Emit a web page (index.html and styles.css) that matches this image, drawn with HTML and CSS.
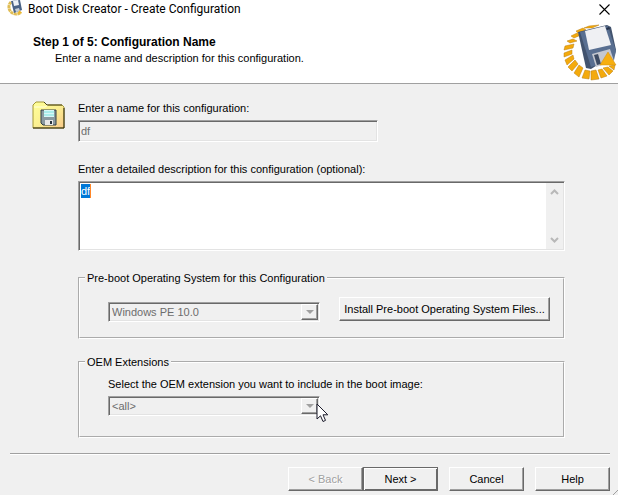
FILE: index.html
```html
<!DOCTYPE html>
<html lang="en">
<head>
    <meta charset="UTF-8">
    <meta name="viewport" content="width=device-width, initial-scale=1.0">
    <title>Boot Disk Creator - Create Configuration</title>
    <link rel="stylesheet" href="styles.css">
</head>
<body>
    <form class="wizard" onsubmit="return false">
        <header class="header">
            <div class="titlebar">
                <svg class="app-icon" width="16" height="18" viewBox="0 0 16 18">
                    <path d="M4 2A7 7 0 1 0 14 12" fill="none" stroke="#e0bd55" stroke-width="3" stroke-dasharray="3 .5"/>
                    <path d="M4 1L13 0L15 10L7 13Z" fill="#4a6386"/>
                    <path d="M6 1L11 0L12 5L7 6Z" fill="#edf1f6"/>
                    <path d="M8 9L12 8L13 11L9 12Z" fill="#c3ccd6"/>
                    <path d="M12 10L15 13L11 14Z" fill="#eeb62a"/>
                </svg>
                <span class="title">Boot Disk Creator - Create Configuration</span>
                <button type="button" class="close" aria-label="Close">
                    <svg width="11" height="11" viewBox="0 0 11 11"><path d="M.5 .5L10.500 10.500M10.500 .5L.5 10.500" stroke="#000" stroke-width="1.100"/></svg>
                </button>
            </div>
            <div class="banner">
                <div class="banner-text">
                    <h1>Step 1 of 5: Configuration Name</h1>
                    <p>Enter a name and description for this configuration.</p>
                </div>
                <svg class="logo" width="54" height="58" viewBox="0 0 54 58">
                    <g fill="#f4aa0c" stroke="#b87d10" stroke-width=".5">
                        <path d="M21 4L26 2L36 1L29 4Z"/>
                        <path d="M13 7L20 4L23 6L15 9Z"/>
                        <path d="M8 12L14 9L18 11L11 14Z"/>
                        <path d="M4 17L10 15L14 17L7 19Z"/>
                        <path d="M2 22L11 20L10 24L1 26Z"/>
                        <path d="M1 29L9 26L9 30L1 33Z"/>
                        <path d="M2 36L10 31L11 35L4 41Z"/>
                        <path d="M5 43L12 36L15 40L9 47Z"/>
                        <path d="M11 49L16 41L20 44L16 53Z"/>
                        <path d="M19 54L22 46L27 47L26 55Z"/>
                        <path d="M28 56L28 47L33 46L36 55Z"/>
                        <path d="M38 54L35 46L39 45L44 52Z"/>
                        <path d="M46 51L40 44L45 43L50 47Z"/>
                        <path d="M51 46L46 42L52 41Z"/>
                    </g>
                    <path d="M15 8L44 1L48 3L53 26L52 30L28 45L23 44Z" fill="#42536e"/>
                    <path d="M17 8L45 2L53 27L51 36L28 43Z" fill="#596f91"/>
                    <path d="M22 7L42 2L48 21L26 26Z" fill="#eff0f3"/>
                    <path d="M43 4L46 3L47 5L44 6Z" fill="#26334a"/>
                    <path d="M29 30L47 25L51 37L33 43Z" fill="#c4c7cf"/>
                    <path d="M31 31L35 30L38 40L34 41Z" fill="#3d4b63"/>
                    <path d="M45 28L53 41L37 41Z" fill="#f6ae10" stroke="#d28d0a" stroke-width=".5"/>
                </svg>
            </div>
        </header>

        <main class="content">
            <svg class="folder" width="34" height="28" viewBox="0 0 34 28">
                <defs>
                    <linearGradient id="folderFill" x1="0" y1="0" x2="1" y2="1">
                        <stop offset="0" stop-color="#ffff98"/>
                        <stop offset=".5" stop-color="#fbf091"/>
                        <stop offset="1" stop-color="#f8c88a"/>
                    </linearGradient>
                </defs>
                <path d="M1 4L4 1H12L15 4H30L32 6V27H1Z" fill="url(#folderFill)" stroke="#a39838"/>
                <path d="M2 6H13L16 4" fill="none" stroke="#ffffdc"/>
                <path d="M1 27H32V7" fill="none" stroke="#29230a"/>
                <path d="M12 1L15 4H30" fill="none" stroke="#4b4518"/>
                <path d="M9 9H24V24H11L9 22Z" fill="#8b9aa0" stroke="#303d44"/>
                <path d="M12 9H22V16H12Z" fill="#d9f7f6"/>
                <path d="M12 11H22M12 14H22" stroke="#7ce2df"/>
                <path d="M13 19H21V24H13Z" fill="#e8e8e8"/>
                <path d="M18 20H20V23H18Z" fill="#25313a"/>
            </svg>

            <div class="fields">
                <div class="field">
                    <label for="name">Enter a name for this configuration:</label>
                    <input type="text" id="name" class="sunken name" value="df" disabled>
                </div>

                <div class="field">
                    <label for="description">Enter a detailed description for this configuration (optional):</label>
                    <div class="sunken memo">
                        <textarea id="description" spellcheck="false">df</textarea>
                        <i class="caret"></i>
                        <div class="scrollbar">
                            <svg width="9" height="6" viewBox="0 0 9 6"><path d="M1 5L4.500 1.500L8 5" fill="none" stroke="#b8b8b8" stroke-width="2"/></svg>
                            <svg width="9" height="6" viewBox="0 0 9 6"><path d="M1 1L4.500 4.500L8 1" fill="none" stroke="#b8b8b8" stroke-width="2"/></svg>
                        </div>
                    </div>
                </div>

                <fieldset class="group preboot">
                    <legend>Pre-boot Operating System for this Configuration</legend>
                    <div class="row">
                        <div class="sunken combo">
                            <select aria-label="Pre-boot Operating System" disabled>
                                <option>Windows PE 10.0</option>
                            </select>
                            <span class="arrow"></span>
                        </div>
                        <button type="button" class="button install">Install Pre-boot Operating System Files...</button>
                    </div>
                </fieldset>

                <fieldset class="group oem">
                    <legend>OEM Extensions</legend>
                    <label for="oem">Select the OEM extension you want to include in the boot image:</label>
                    <div class="sunken combo">
                        <select id="oem" disabled>
                            <option>&lt;all&gt;</option>
                        </select>
                        <span class="arrow"></span>
                        <svg class="cursor" width="13" height="20" viewBox="0 0 13 20"><path d="M1 1V16L4.500 12.800L7 18.500L9.500 17.400L7 11.800H11.800Z" fill="#fff" stroke="#1b1b2b"/></svg>
                    </div>
                </fieldset>
            </div>
        </main>

        <footer class="footer">
            <div class="nav">
                <button type="button" class="button" disabled>&lt; Back</button>
                <button type="submit" class="button default">Next &gt;</button>
            </div>
            <button type="button" class="button">Cancel</button>
            <button type="button" class="button">Help</button>
        </footer>
        <svg class="grip" width="5" height="5" viewBox="0 0 5 5"><path d="M0 5L5 0" stroke="#a0a0a0"/></svg>
    </form>
    <script>
        const description = document.getElementById("description");
        description.focus();
        description.select();
    </script>
</body>
</html>
```
FILE: styles.css
```css
* {
    box-sizing: border-box;
}
body {
    margin: 0;
    background-color: #f0f0f0;
    color: #000;
    font-family: "Liberation Sans", Arial, sans-serif;
    font-size: 11px;
    line-height: 14px;
}
.wizard {
    position: relative;
    display: flex;
    flex-direction: column;
    min-height: 100vh;
}
input, select, textarea, button {
    font: inherit;
    color: inherit;
    margin: 0;
}
.header {
    background-color: #fff;
    border-bottom: 1px solid #a0a0a0;
}
.titlebar {
    display: flex;
    align-items: center;
    height: 18px;
    padding: 0 8px 0 7px;
    font-family: Roboto, "Open Sans", sans-serif;
    font-size: 12px;
}
.title {
    margin-left: 5px;
}
.close {
    display: flex;
    margin-left: auto;
    padding: 0;
    border: 0;
    background: none;
}
.banner {
    display: flex;
    justify-content: space-between;
    height: 65px;
    padding: 0 1px 0 33px;
}
.banner-text {
    padding-top: 16px;
}
h1 {
    margin: 0;
    font-size: 12px;
    line-height: 16px;
}
.banner p {
    margin: 0;
    padding-left: 22px;
    line-height: 16px;
}
.logo {
    margin-top: 6px;
}
.content {
    display: flex;
    padding: 17px 53px 15px 32px;
}
.folder {
    flex: none;
    margin-right: 12px;
}
.fields {
    flex: 1;
    min-width: 0;
}
.field label {
    display: block;
    margin-bottom: 5px;
}
.sunken {
    border: 1px solid;
    border-color: #a0a0a0 #fff #fff #a0a0a0;
    box-shadow: inset 1px 1px #696969, inset -1px -1px #e3e3e3;
}
.name {
    display: block;
    width: 300px;
    max-width: 100%;
    height: 22px;
    padding: 0 2px;
    background-color: #f0f0f0;
    color: #6d6d6d;
    margin-bottom: 20px;
}
.memo {
    position: relative;
    display: flex;
    height: 70px;
    padding: 1px;
    background-color: #fff;
    margin-bottom: 20px;
}
.memo textarea {
    flex: 1;
    min-width: 0;
    padding: 1px;
    border: 0;
    outline: 0;
    resize: none;
    overflow: hidden;
    background: none;
}
.memo textarea::selection {
    background-color: #0078d7;
    color: #fff;
}
.caret {
    position: absolute;
    left: 11px;
    top: 2px;
    width: 1px;
    height: 14px;
    background-color: #ff8728;
}
.scrollbar {
    display: flex;
    flex-direction: column;
    justify-content: space-between;
    align-items: center;
    width: 17px;
    padding: 6px 0;
    background-color: #f0f0f0;
}
.group {
    min-width: 0;
    margin: 0 0 16px;
    padding: 0 13px 0 28px;
    border: 2px groove #fff;
}
.group legend {
    margin-left: -23px;
    padding: 0 2px;
}
.preboot {
    height: 68px;
}
.oem {
    height: 83px;
    margin-bottom: 0;
}
.oem label {
    display: block;
    margin: 8px 0 5px;
}
.row {
    display: flex;
    justify-content: space-between;
    padding-top: 12px;
}
.combo {
    position: relative;
    display: flex;
    width: 212px;
    height: 20px;
    padding: 1px;
}
.row .combo {
    margin-top: 5px;
}
.combo select {
    flex: 1;
    appearance: none;
    padding: 0 2px;
    border: 0;
    background: none;
    color: #6d6d6d;
    opacity: 1;
}
.arrow {
    display: flex;
    align-items: center;
    justify-content: center;
    width: 17px;
    border: 1px solid;
    border-color: #fff #696969 #696969 #fff;
    box-shadow: inset -1px -1px #a0a0a0;
}
.arrow::after {
    content: "";
    border: 4px solid transparent;
    border-top-color: #a0a0a0;
    border-bottom: 0;
}
.cursor {
    position: absolute;
    right: -10px;
    top: 6px;
}
.button {
    width: 75px;
    height: 24px;
    padding: 0;
    border: 1px solid;
    border-color: #fff #696969 #696969 #fff;
    box-shadow: inset -1px -1px #a0a0a0;
    background-color: #f0f0f0;
}
.button:disabled {
    color: #a0a0a0;
    text-shadow: 1px 1px #fff;
}
.default {
    border-color: #696969;
    box-shadow: inset 1px 1px #fff, inset -1px -1px #696969;
}
.install {
    width: 211px;
}
.footer {
    display: flex;
    justify-content: flex-end;
    gap: 11px;
    margin: 0 8px 0 10px;
    padding-top: 13px;
    border-top: 1px solid #a0a0a0;
    box-shadow: inset 0 1px #fff;
}
.nav {
    display: flex;
}
.grip {
    position: absolute;
    right: 0;
    bottom: 0;
}
```
